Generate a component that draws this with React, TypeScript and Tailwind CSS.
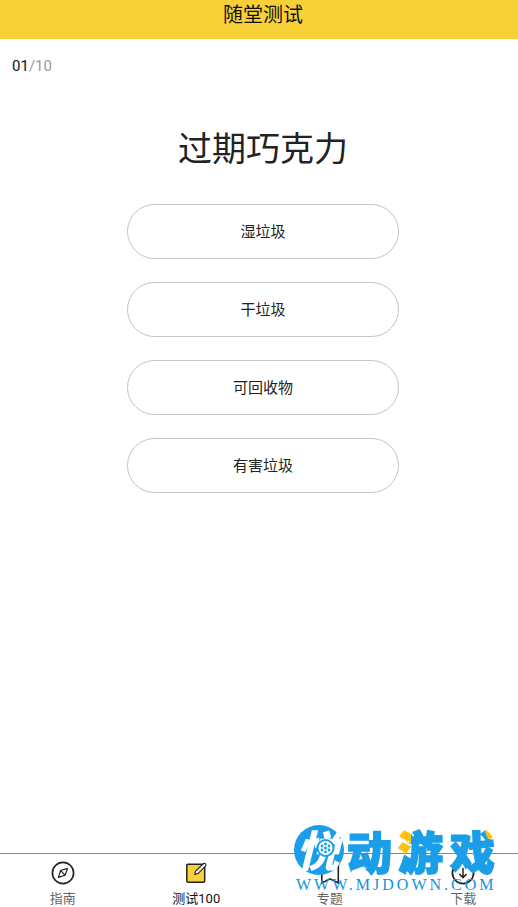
import { useState, type ReactNode } from "react";

interface Tab {
  id: string;
  label: string;
  icon: ReactNode;
}

const OPTIONS = ["湿垃圾", "干垃圾", "可回收物", "有害垃圾"];

const TABS: Tab[] = [
  { id: "guide", label: "指南", icon: <CompassIcon /> },
  { id: "quiz", label: "测试100", icon: <NoteIcon /> },
  { id: "topics", label: "专题", icon: <BookmarkIcon /> },
  { id: "download", label: "下载", icon: <DownloadIcon /> },
];

function CompassIcon() {
  return (
    <svg className="size-6" viewBox="0 0 24 24" fill="none" stroke="#222" aria-hidden="true">
      <circle cx="12" cy="12" r="10.6" strokeWidth="1.7" />
      <path d="M16.6 7.4 14 14.3 7.4 16.4 9.6 9.5Z" strokeWidth="1.2" strokeLinejoin="round" />
      <path d="M9.8 9.6 13.9 14.2" strokeWidth="1.2" />
    </svg>
  );
}

function NoteIcon() {
  return (
    <svg className="size-6" viewBox="0 0 24 24" fill="none" stroke="#222" aria-hidden="true">
      <rect x="2.8" y="3.3" width="17.9" height="18" rx="1.2" fill="#f8d038" strokeWidth="1.5" />
      <path
        d="M10.7 13.6 11.6 10.2 19 3Q20.4 1.8 21.5 2.9 22.5 4 21.3 5.3L13.9 12.6Z"
        fill="#fff"
        strokeWidth="1.1"
        strokeLinejoin="round"
      />
    </svg>
  );
}

function BookmarkIcon() {
  return (
    <svg className="size-6" viewBox="0 0 24 24" fill="none" stroke="#222" aria-hidden="true">
      <path d="M3.8 2.5H20.3V22L12 17.8 3.8 22Z" strokeWidth="1.6" />
    </svg>
  );
}

function DownloadIcon() {
  return (
    <svg className="size-6" viewBox="0 0 24 24" fill="none" stroke="#222" aria-hidden="true">
      <circle cx="12" cy="12" r="10.6" strokeWidth="1.7" />
      <path d="M12 7V16.6M8.4 13 12 16.6 15.6 13" strokeWidth="1.5" />
    </svg>
  );
}

function SiteMark() {
  return (
    <div className="pointer-events-none absolute right-5 bottom-3 w-[205px]">
      <svg
        className="block h-[52px] w-[205px] overflow-visible font-['Noto_Sans_CJK_SC',sans-serif] font-black drop-shadow-xs"
        viewBox="0 0 205 52"
        aria-label="悦动游戏"
      >
        <defs>
          {/* the water dots of 游 and the dot of 戏 are gold */}
          <pattern id="youFill" patternUnits="userSpaceOnUse" x="0" y="0" width="205" height="54">
            <rect width="205" height="54" fill="#1a9ee8" />
            <path d="M100 0H118V17L116 30H100Z" fill="#ffc20e" />
          </pattern>
          <pattern id="xiFill" patternUnits="userSpaceOnUse" x="0" y="0" width="205" height="54">
            <rect width="205" height="54" fill="#1a9ee8" />
            <path d="M190 2H205V14H195Z" fill="#ffc20e" />
          </pattern>
        </defs>
        <circle cx="26" cy="25" r="25" fill="#1a9ee8" />
        <text x="3" y="42" fontSize="43" fontStyle="italic" fill="#fff">悦</text>
        <circle cx="32.5" cy="23" r="9" fill="#1a9ee8" />
        <circle cx="32.5" cy="23" r="7" fill="#fff" />
        <g fill="#1a9ee8">
          <circle cx="32.5" cy="23" r="1.5" />
          <circle cx="32.5" cy="19" r="1.4" />
          <circle cx="36" cy="21" r="1.4" />
          <circle cx="36" cy="25" r="1.4" />
          <circle cx="32.5" cy="27" r="1.4" />
          <circle cx="29" cy="25" r="1.4" />
          <circle cx="29" cy="21" r="1.4" />
        </g>
        <g fontSize="45" strokeWidth="1.6">
          <text x="54" y="45" fill="#1a9ee8" stroke="#1a9ee8">动</text>
          <text x="105" y="45" fill="url(#youFill)" stroke="url(#youFill)">游</text>
          <text x="157" y="45" fill="url(#xiFill)" stroke="url(#xiFill)">戏</text>
        </g>
      </svg>
      <p className="pb-0.5 pl-[3px] font-['Liberation_Serif',serif] text-base leading-4 tracking-[3px] whitespace-nowrap text-[#1590dc]">
        WWW.MJDOWN.COM
      </p>
    </div>
  );
}

export default function App() {
  const [activeTab, setActiveTab] = useState("quiz");
  const [answer, setAnswer] = useState<string | null>(null);

  return (
    <div className="relative min-h-screen overflow-hidden bg-white font-[Roboto,'Noto_Sans_CJK_SC',sans-serif] text-[#222]">
      <div className="-mr-3 -ml-1 flex min-h-screen flex-col">
        <header className="flex h-[39px] items-start justify-center bg-[#f8d038]">
          <h1 className="text-xl leading-[30px] text-[#111]">随堂测试</h1>
        </header>

        <main className="flex flex-1 flex-col">
          <p className="mt-[15px] ml-4 text-[15px] leading-6 text-[#999]">
            <span className="text-[#111]">01</span>/10
          </p>
          <h2 className="mt-[47px] text-center text-[34px] leading-12">过期巧克力</h2>
          <div className="mx-auto mt-[31px] flex w-[272px] flex-col gap-[23px]">
            {OPTIONS.map((option) => (
              <button
                key={option}
                type="button"
                aria-pressed={answer === option}
                onClick={() => setAnswer(option)}
                className="h-[55px] rounded-full border border-[#c4c4c4] pt-0.5 text-[15px]"
              >
                {option}
              </button>
            ))}
          </div>
        </main>

        <nav className="grid h-[54px] grid-cols-4 border-t border-[#888]">
          {TABS.map((tab) => (
            <button
              key={tab.id}
              type="button"
              onClick={() => setActiveTab(tab.id)}
              className={`flex flex-col items-center pt-[7px] text-[13px] leading-7 ${
                activeTab === tab.id ? "text-[#111]" : "text-[#666]"
              }`}
            >
              {tab.icon}
              {tab.label}
            </button>
          ))}
        </nav>
      </div>
      <SiteMark />
    </div>
  );
}
